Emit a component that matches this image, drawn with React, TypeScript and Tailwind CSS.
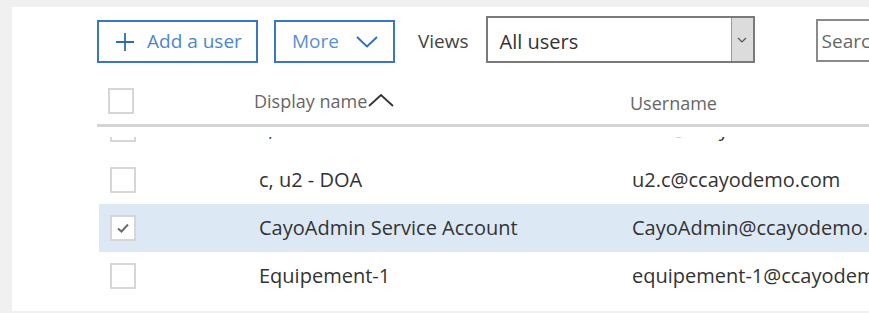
import React from "react";

const font = { fontFamily: '"Open Sans", "Noto Sans", "Liberation Sans", sans-serif' };

function Checkbox({ checked }: { checked?: boolean }) {
  return (
    <div className="w-[26px] h-[26px] border-2 border-[#d6d6d6] bg-white flex items-center justify-center shrink-0">
      {checked && (
        <svg width="14" height="12" viewBox="0 0 14 12">
          <path d="M2 6.5 L5.5 9.5 L12 2.5" fill="none" stroke="#6b6b6b" strokeWidth="2" />
        </svg>
      )}
    </div>
  );
}

function Row({ name, user, selected, extra }: { name: string; user: string; selected?: boolean; extra?: string }) {
  return (
    <div className={`h-[48px] flex items-center ${selected ? "bg-[#dce9f5]" : ""} ${extra ?? ""}`}>
      <div className="w-[160px] shrink-0 pl-[11px] flex items-center">
        <Checkbox checked={selected} />
      </div>
      <div className="w-[373px] shrink-0 text-[20px] text-[#333] whitespace-nowrap">{name}</div>
      <div className="shrink-0 text-[20px] text-[#333] whitespace-nowrap">{user}</div>
    </div>
  );
}

export default function App() {
  return (
    <div className="w-[869px] h-[313px] bg-[#f0f0f0] pt-[7px] pl-[12px] pb-[2px] overflow-hidden" style={font}>
      <div className="bg-white h-full pl-[85px] overflow-hidden">
        {/* toolbar */}
        <div className="pt-[9px] h-[56px] flex items-end">
          <button className="shrink-0 h-[43px] w-[161px] border-2 border-[#3a76c2] flex items-center pl-[16px] text-[#4c86cc] text-[19px]">
            <svg width="20" height="20" viewBox="0 0 20 20" className="mr-[12px] shrink-0">
              <path d="M10 1 V19 M1 10 H19" stroke="#2f6cb8" strokeWidth="1.8" />
            </svg>
            <span className="whitespace-nowrap">Add a user</span>
          </button>
          <button className="shrink-0 ml-[16px] h-[43px] w-[121px] border-2 border-[#3a76c2] flex items-center pl-[16px] text-[#5a8fd0] text-[19px]">
            <span>More</span>
            <svg width="22" height="12" viewBox="0 0 22 12" className="ml-[17px] shrink-0">
              <path d="M1 1 L11 10.5 L21 1" fill="none" stroke="#2f6cb8" strokeWidth="1.8" />
            </svg>
          </button>
          <div className="shrink-0 ml-[23px] h-[47px] pt-[4px] flex items-center text-[19px] text-[#444]">Views</div>
          <div className="shrink-0 ml-[17px] h-[47px] w-[269px] border-2 border-[#7a7a7a] flex">
            <div className="flex-1 flex items-center pl-[12px] pt-[4px] text-[20px] text-[#333]">All users</div>
            <div className="w-[22px] bg-[#dcdcdc] border-l border-[#9a9a9a] flex items-center justify-center">
              <svg width="10" height="6" viewBox="0 0 10 6">
                <path d="M1 1 L5 5 L9 1" fill="none" stroke="#555" strokeWidth="1.2" />
              </svg>
            </div>
          </div>
          <div className="shrink-0 ml-[61px] mb-[1px] h-[43px] w-[100px] border-2 border-[#8a8a8a] flex items-center pl-[4px] pt-[2px] text-[19px] text-[#666] whitespace-nowrap">
            Search
          </div>
        </div>
        {/* header */}
        <div className="h-[61px] pt-[15px] flex items-center">
          <div className="w-[157px] shrink-0 pl-[11px] flex items-center">
            <Checkbox />
          </div>
          <div className="w-[376px] shrink-0 flex items-center text-[18px] text-[#666]">
            <span className="whitespace-nowrap">Display name</span>
            <svg width="26" height="14" viewBox="0 0 26 14" className="ml-[1px] -mt-[3px] shrink-0">
              <path d="M1 13 L13 2 L25 13" fill="none" stroke="#333" strokeWidth="1.8" />
            </svg>
          </div>
          <div className="shrink-0 text-[18px] text-[#666] mt-[5px]">Username</div>
        </div>
        <div className="h-[3px] bg-[#d4d4d4] w-full" />
        <div className="h-[10px] bg-white" />
        {/* rows */}
        <div className="overflow-hidden h-[200px] pl-[2px]">
          <Row name="c, u1 - DOA" user="u1.c@ccayodemo.com" extra="-mt-[32px] mb-[3px]" />
          <Row name="c, u2 - DOA" user="u2.c@ccayodemo.com" />
          <Row name="CayoAdmin Service Account" user="CayoAdmin@ccayodemo.com" selected />
          <Row name="Equipement-1" user="equipement-1@ccayodemo.com" />
        </div>
      </div>
    </div>
  );
}
